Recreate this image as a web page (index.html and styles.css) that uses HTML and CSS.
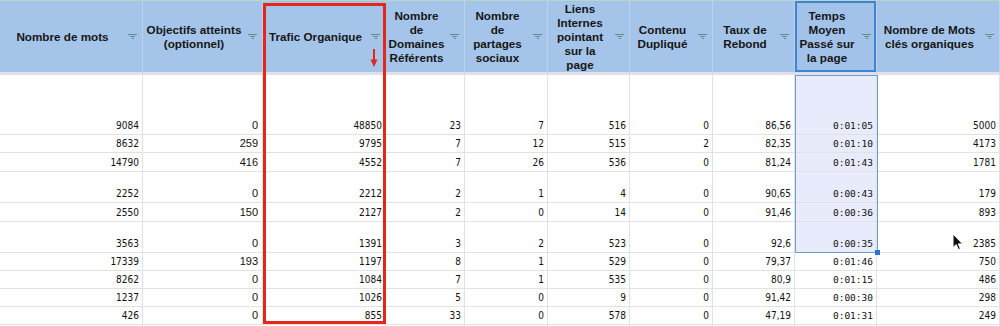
FILE: index.html
```html
<!DOCTYPE html>
<html lang="fr">
<head>
<meta charset="utf-8">
<title>Tableau SEO</title>
<link rel="stylesheet" href="styles.css">
</head>
<body>
<div class="wrap">
  <div class="sheet">
    <div class="hd"><span class="ht">Nombre de mots</span><span class="flt"></span></div>
    <div class="hd"><span class="ht">Objectifs atteints<br>(optionnel)</span><span class="flt"></span></div>
    <div class="hd"><span class="ht">Trafic Organique</span><span class="flt"></span></div>
    <div class="hd"><span class="ht">Nombre<br>de<br>Domaines<br>Référents</span><span class="flt"></span></div>
    <div class="hd"><span class="ht">Nombre<br>de<br>partages<br>sociaux</span><span class="flt"></span></div>
    <div class="hd"><span class="ht">Liens<br>Internes<br>pointant<br>sur la<br>page</span><span class="flt"></span></div>
    <div class="hd"><span class="ht">Contenu<br>Dupliqué</span><span class="flt"></span></div>
    <div class="hd"><span class="ht">Taux de<br>Rebond</span><span class="flt"></span></div>
    <div class="hd hd-sel"><span class="ht">Temps<br>Moyen<br>Passé sur<br>la page</span><span class="flt"></span></div>
    <div class="hd"><span class="ht">Nombre de Mots<br>clés organiques</span><span class="flt"></span></div>

    <div class="c">9084</div><div class="c alt">0</div><div class="c">48850</div><div class="c">23</div><div class="c">7</div><div class="c">516</div><div class="c">0</div><div class="c">86,56</div><div class="c t sel">0:01:05</div><div class="c">5000</div>
    <div class="c">8632</div><div class="c alt">259</div><div class="c">9795</div><div class="c">7</div><div class="c">12</div><div class="c">515</div><div class="c">2</div><div class="c">82,35</div><div class="c t sel">0:01:10</div><div class="c">4173</div>
    <div class="c">14790</div><div class="c alt">416</div><div class="c">4552</div><div class="c">7</div><div class="c">26</div><div class="c">536</div><div class="c">0</div><div class="c">81,24</div><div class="c t sel">0:01:43</div><div class="c">1781</div>
    <div class="c">2252</div><div class="c alt">0</div><div class="c">2212</div><div class="c">2</div><div class="c">1</div><div class="c">4</div><div class="c">0</div><div class="c">90,65</div><div class="c t sel">0:00:43</div><div class="c">179</div>
    <div class="c">2550</div><div class="c alt">150</div><div class="c">2127</div><div class="c">2</div><div class="c">0</div><div class="c">14</div><div class="c">0</div><div class="c">91,46</div><div class="c t sel">0:00:36</div><div class="c">893</div>
    <div class="c">3563</div><div class="c alt">0</div><div class="c">1391</div><div class="c">3</div><div class="c">2</div><div class="c">523</div><div class="c">0</div><div class="c">92,6</div><div class="c t sel">0:00:35</div><div class="c">2385</div>
    <div class="c">17339</div><div class="c alt">193</div><div class="c">1197</div><div class="c">8</div><div class="c">1</div><div class="c">529</div><div class="c">0</div><div class="c">79,37</div><div class="c t">0:01:46</div><div class="c">750</div>
    <div class="c">8262</div><div class="c alt">0</div><div class="c">1084</div><div class="c">7</div><div class="c">1</div><div class="c">535</div><div class="c">0</div><div class="c">80,9</div><div class="c t">0:01:15</div><div class="c">486</div>
    <div class="c">1237</div><div class="c alt">0</div><div class="c">1026</div><div class="c">5</div><div class="c">0</div><div class="c">9</div><div class="c">0</div><div class="c">91,42</div><div class="c t">0:00:30</div><div class="c">298</div>
    <div class="c">426</div><div class="c alt">0</div><div class="c">855</div><div class="c">33</div><div class="c">0</div><div class="c">578</div><div class="c">0</div><div class="c">47,19</div><div class="c t">0:01:31</div><div class="c">249</div>
    <div class="c"></div><div class="c"></div><div class="c"></div><div class="c"></div><div class="c"></div><div class="c"></div><div class="c"></div><div class="c"></div><div class="c"></div><div class="c"></div>
  </div>

  <div class="sel-box"></div>
  <div class="sel-handle"></div>
  <div class="red-box"></div>
  <svg class="red-arrow" width="10" height="20" viewBox="0 0 10 20">
    <path d="M5 0V12" stroke="#e5261b" stroke-width="2"/>
    <path d="M1.5 10.5H8.5L5 18Z" fill="#e5261b"/>
  </svg>
  <svg class="cursor" width="12" height="18" viewBox="0 0 12 18">
    <path d="M1 1V14.5L4.2 11.6L6.4 16.6L8.4 15.7L6.3 10.9H10.6Z" fill="#111" stroke="#fff" stroke-width="1"/>
  </svg>
</div>
</body>
</html>
```

FILE: styles.css
```css
html, body {
  margin: 0;
  padding: 0;
  background: #ffffff;
}

body {
  width: 1000px;
  height: 326px;
  overflow: hidden;
}

.wrap {
  position: relative;
  width: 1000px;
  height: 326px;
  overflow: hidden;
}

.sheet {
  display: grid;
  grid-template-columns: 143px 120px 123px 79px 83px 82px 83px 82px 82px 123px;
  grid-template-rows: 75px 60px 18px 19px 31px 19px 31px 18px 18px 18px 18px 18px;
}

.hd {
  box-sizing: border-box;
  display: flex;
  align-items: center;
  background: #a4c4e9;
  border-right: 1px solid #bdd2eb;
  border-top: 1px solid #b9d6c4;
  border-bottom: 3px solid #dfe0ea;
  font-family: "Liberation Sans", Arial, sans-serif;
  font-weight: bold;
  font-size: 11.7px;
  line-height: 14px;
  color: #161616;
}

.hd-sel {
  background: #a2c2ea;
  box-shadow: inset 0 0 0 2px #3e84d5;
}

.ht {
  flex: 1;
  text-align: center;
}

.flt {
  flex: none;
  width: 9px;
  height: 5px;
  margin: 0 5px 0 3px;
  background:
    linear-gradient(#5f8e88, #5f8e88) 0 0 / 9px 1px no-repeat,
    linear-gradient(#5f8e88, #5f8e88) 2px 2px / 5px 1px no-repeat,
    linear-gradient(#5f8e88, #5f8e88) 3.5px 4px / 2px 1px no-repeat;
}

.c {
  box-sizing: border-box;
  display: flex;
  align-items: flex-end;
  justify-content: flex-end;
  padding: 0 3px 2px 0;
  border-right: 1px solid #e2e2e2;
  border-bottom: 1px solid #e2e2e2;
  font-family: "DejaVu Sans Condensed", "DejaVu Sans", sans-serif;
  font-stretch: condensed;
  font-size: 10px;
  line-height: 13px;
  color: #111111;
}

.alt {
  font-family: "Liberation Sans", Arial, sans-serif;
  font-stretch: normal;
  font-size: 11px;
  padding-right: 4px;
}

.t {
  font-family: "DejaVu Sans Mono", monospace;
  font-stretch: normal;
  font-size: 9.5px;
}

.sel {
  background: #e8ebfb;
}

.sel-box {
  position: absolute;
  left: 795px;
  top: 75px;
  width: 83px;
  height: 178px;
  box-sizing: border-box;
  border: 1px solid #6e9dd3;
}

.sel-handle {
  position: absolute;
  left: 875px;
  top: 250px;
  width: 5px;
  height: 5px;
  background: #2f6fd1;
}

.red-box {
  position: absolute;
  left: 263px;
  top: 3px;
  width: 123px;
  height: 321px;
  box-sizing: border-box;
  border: 3px solid #e5261b;
}

.red-arrow {
  position: absolute;
  left: 369px;
  top: 49px;
}

.cursor {
  position: absolute;
  left: 952px;
  top: 233px;
}
```
